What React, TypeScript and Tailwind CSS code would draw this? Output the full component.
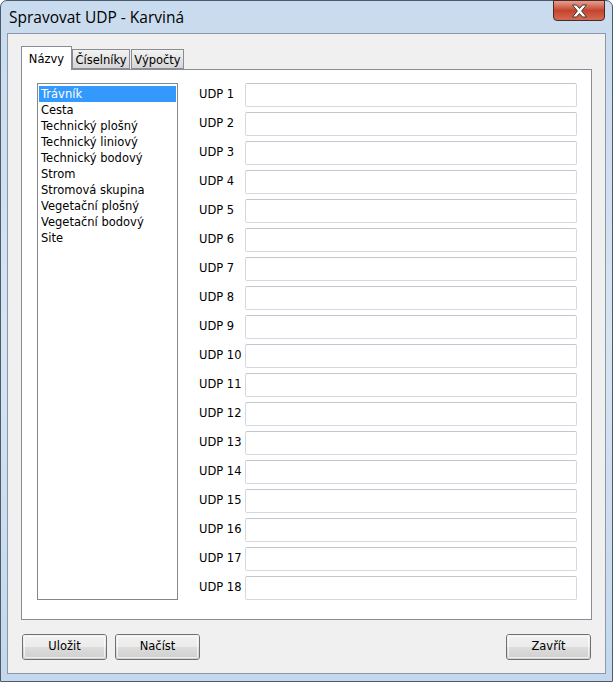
import React from 'react';

const items = [
  'Trávník',
  'Cesta',
  'Technický plošný',
  'Technický liniový',
  'Technický bodový',
  'Strom',
  'Stromová skupina',
  'Vegetační plošný',
  'Vegetační bodový',
  'Site',
];

const udps = Array.from({ length: 18 }, (_, i) => `UDP ${i + 1}`);

const Button = ({ label }: { label: string }) => (
  <button className="relative h-[26px] w-[85px] overflow-hidden rounded-[3px] border border-[#707070] text-[11.5px] text-black">
    <span className="absolute inset-x-0 top-0 h-1/2 bg-gradient-to-b from-[#f2f2f2] to-[#ebebeb]" />
    <span className="absolute inset-x-0 bottom-0 h-1/2 bg-gradient-to-b from-[#dddddd] to-[#cfcfcf]" />
    <span className="absolute inset-[1px] rounded-[2px] border border-[#fcfcfc]/70" />
    <span className="relative">{label}</span>
  </button>
);

export default function App() {
  return (
    <div
      className="flex h-[682px] w-[613px] flex-col rounded-t-[7px] border border-[#4c5b6b] bg-gradient-to-b from-[#c9dbee] via-[#d7e4f2] to-[#c4d7ec] px-[6px] pb-[7px]"
      style={{ fontFamily: '"DejaVu Sans", sans-serif' }}
    >
      {/* titulek */}
      <div className="relative flex h-[32px] items-start">
        <span
          className="pl-[2px] pt-[6px] text-[15.5px] leading-[20px] text-black"
          style={{ fontFamily: '"Open Sans", "Noto Sans", sans-serif' }}
        >
          Spravovat UDP - Karviná
        </span>
        <div className="absolute right-[1px] top-[-1px] flex h-[21px] w-[52px] items-center justify-center overflow-hidden rounded-b-[4px] border border-[#4a2a24] bg-gradient-to-b from-[#e4a08f] via-[#c5432d] to-[#d36a54]">
          <svg width="17" height="14" viewBox="0 0 17 14">
            <path
              d="M1.5 1 L5.5 1 L8.5 4.5 L11.5 1 L15.5 1 L10.6 7 L15.5 13 L11.5 13 L8.5 9.5 L5.5 13 L1.5 13 L6.4 7 Z"
              fill="#ffffff"
              stroke="#3b3b3b"
              strokeWidth="1"
              strokeLinejoin="round"
            />
          </svg>
        </div>
      </div>

      {/* klientská oblast */}
      <div className="flex flex-1 flex-col border border-[#8a98a8] bg-[#f0f0f0] px-[13px] pt-[12px] pb-[13px] text-[11.5px] text-black">
        {/* záložky */}
        <div className="flex h-[23px] items-end">
          <div className="relative z-10 -mb-px flex h-[24px] w-[51px] items-start justify-center border border-b-0 border-[#898c95] bg-white pt-[4px]">
            Názvy
          </div>
          <div className="flex h-[20px] w-[58px] items-start justify-center border border-[#898c95] bg-gradient-to-b from-[#f3f3f3] to-[#d5d5d5] pt-[2px]">
            Číselníky
          </div>
          <div className="ml-[1px] flex h-[20px] w-[53px] items-start justify-center border border-[#898c95] bg-gradient-to-b from-[#f3f3f3] to-[#d5d5d5] pt-[2px]">
            Výpočty
          </div>
        </div>

        {/* panel */}
        <div className="flex h-[551px] w-[571px] gap-[21px] border border-[#898c95] bg-white pl-[15px] pt-[13px]">
          <div className="h-[517px] w-[141px] border border-[#828790] bg-white px-[1px] pt-[2px]">
            {items.map((item, index) => (
              <div
                key={index}
                className={`h-[16px] pl-[2px] leading-[16px] ${index === 0 ? 'bg-[#3399ff] text-white' : ''}`}
              >
                {item}
              </div>
            ))}
          </div>
          <div className="flex flex-col gap-[5px]">
            {udps.map((udp) => (
              <div key={udp} className="flex h-[24px] items-center">
                <span className="w-[46px]">{udp}</span>
                <div className="h-[24px] w-[332px] rounded-[2px] border border-[#d5d8dd] border-t-[#c2c5cb] bg-white" />
              </div>
            ))}
          </div>
        </div>

        {/* tlačítka */}
        <div className="mt-[14px] flex items-center">
          <div className="ml-[1px] flex gap-[8px]">
            <Button label="Uložit" />
            <Button label="Načíst" />
          </div>
          <div className="ml-auto mr-[1px]">
            <Button label="Zavřít" />
          </div>
        </div>
      </div>
    </div>
  );
}
